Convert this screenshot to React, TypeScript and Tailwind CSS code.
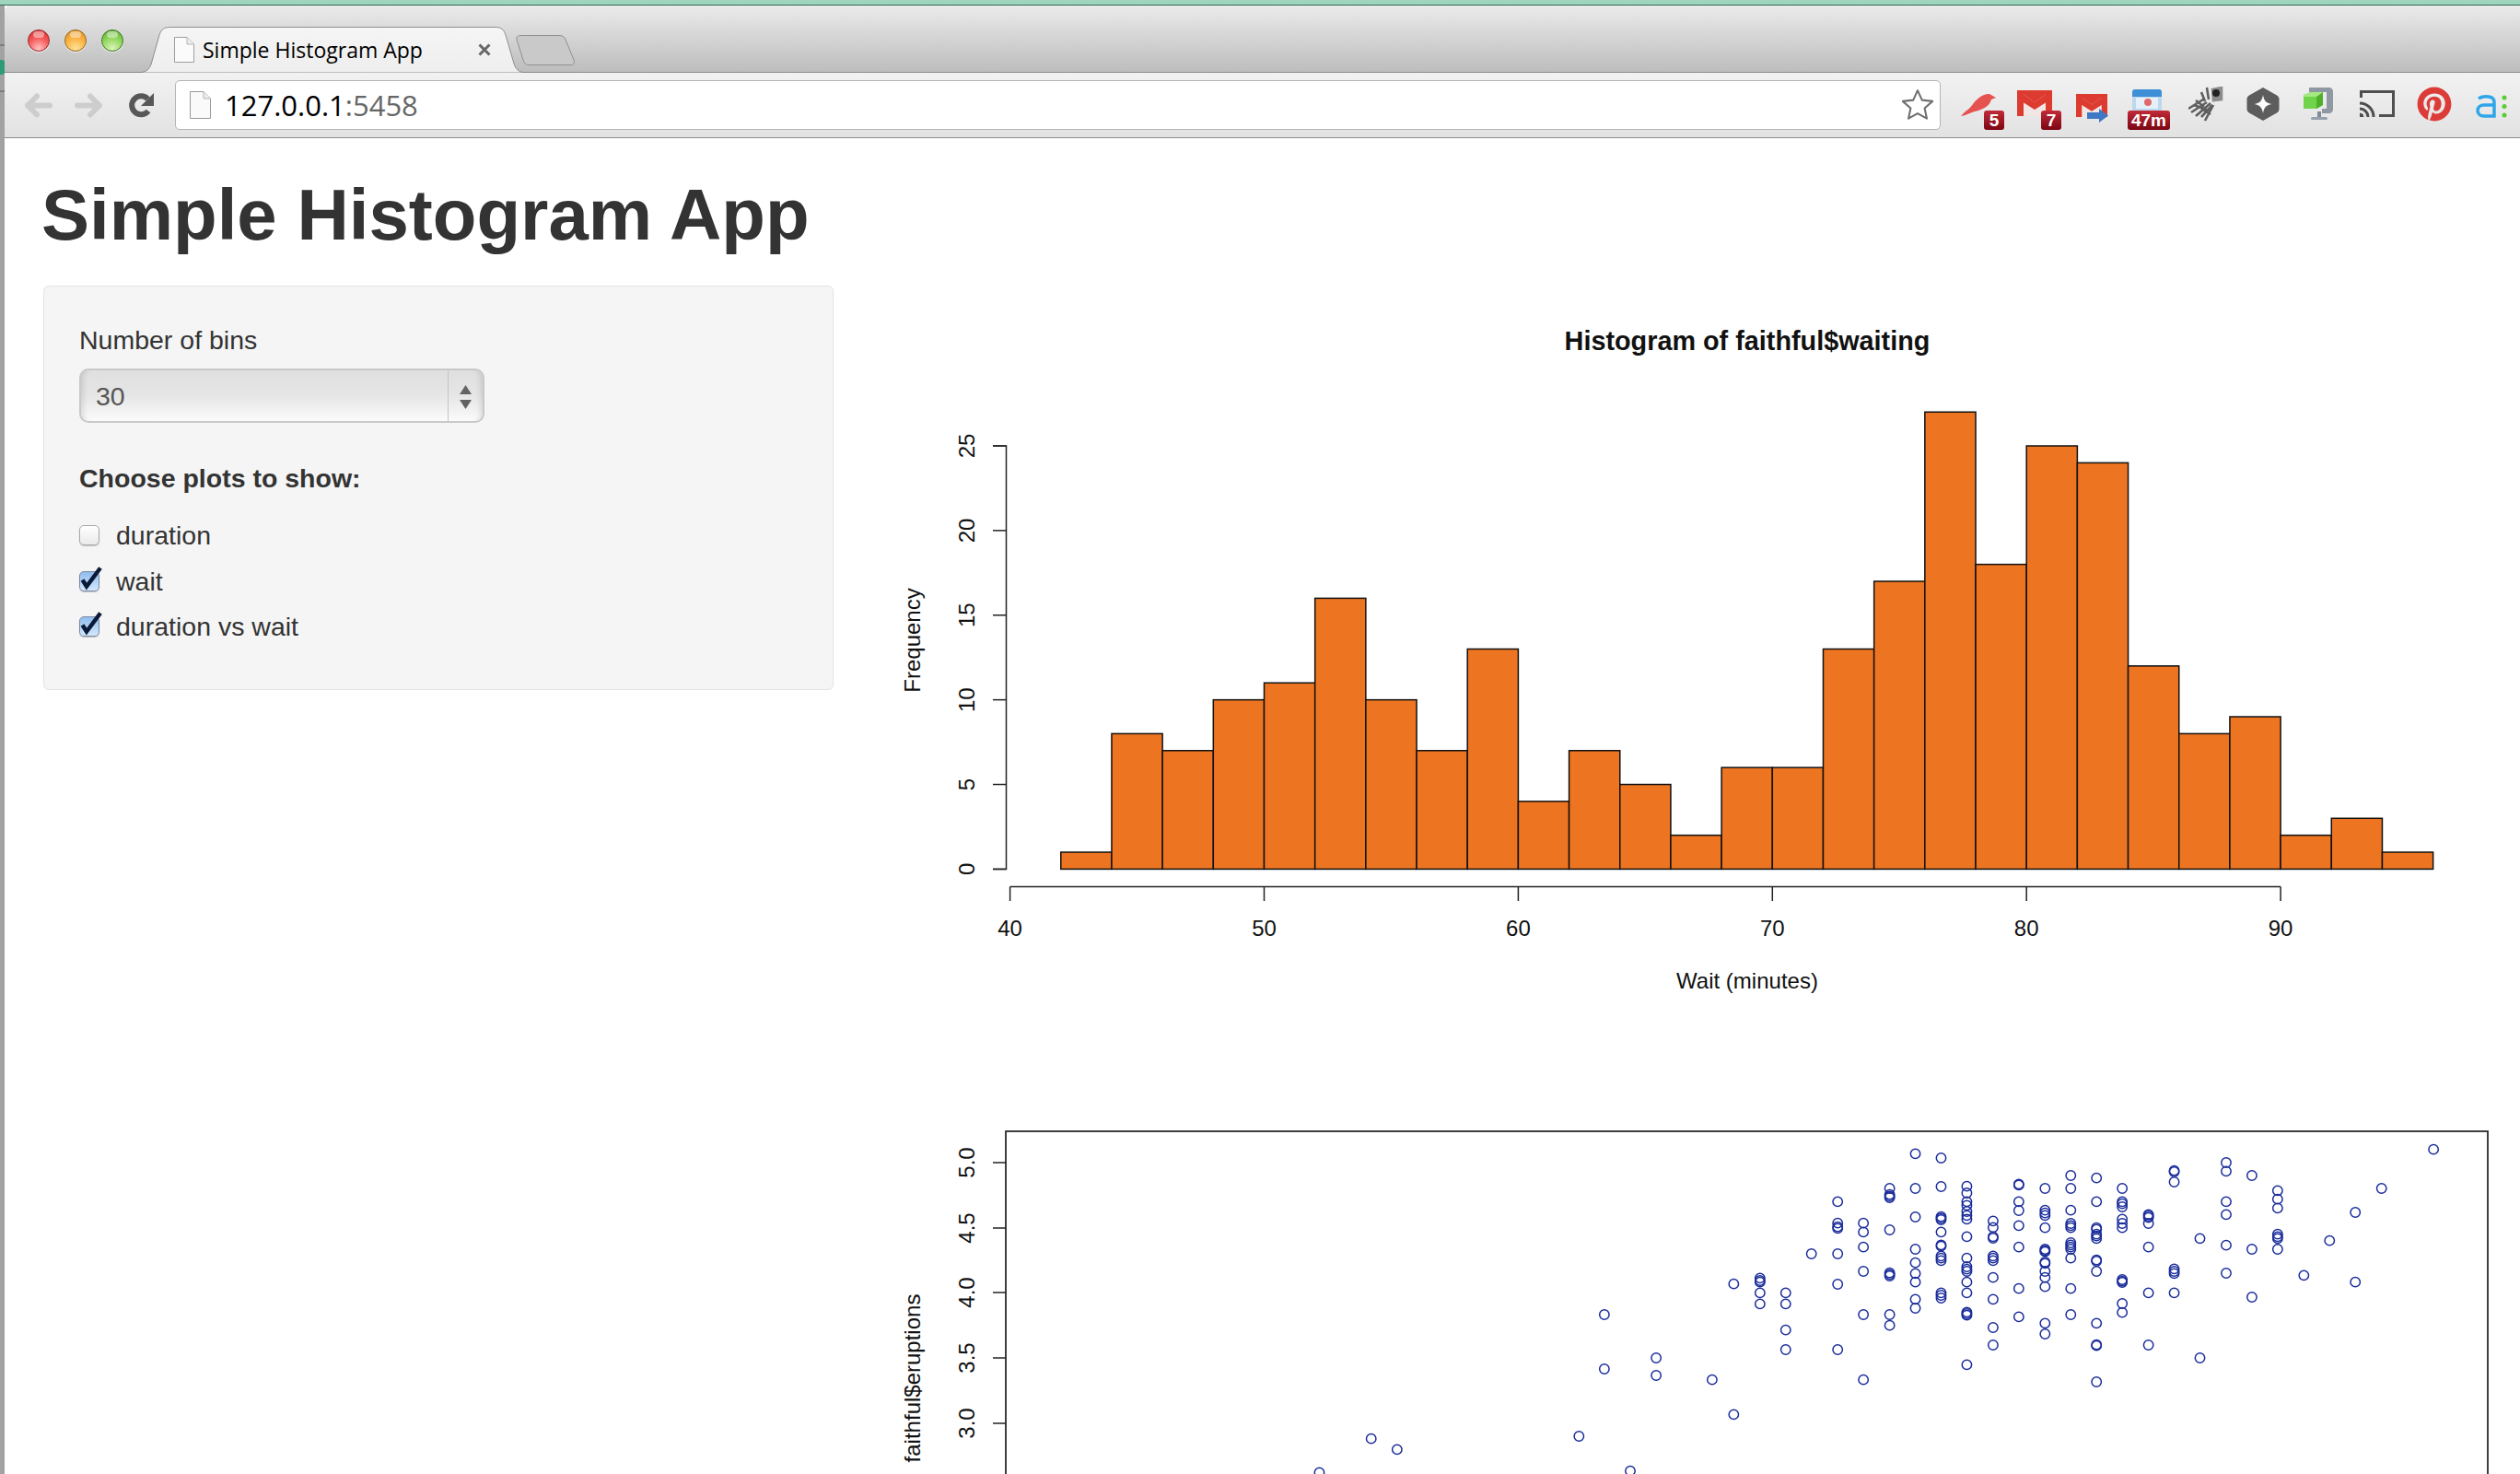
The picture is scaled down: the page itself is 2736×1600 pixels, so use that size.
import { FaPinterest } from "react-icons/fa";

const bars = [1, 8, 7, 10, 11, 16, 10, 7, 13, 4, 7, 5, 2, 6, 6, 13, 17, 27, 18, 25, 24, 12, 8, 9, 2, 3, 1];
const yPos = (v: number) => 943.4 - v * 18.376;
const xPos = (v: number) => 1096.6 + (v - 40) * 27.59;

const rightCols: [number, number[]][] = [
  [-2, [893]],
  [40, [581, 1006]],
  [91, [562, 570, 575, 610, 646]],
  [141, [610, 646, 731, 795]],
  [191, [483]],
  [242, [313, 383, 395, 400, 483, 582, 795]],
  [292, [383, 412, 461, 540, 681, 893]],
  [343, [270, 290, 295, 300, 405, 545, 550, 555, 681, 716]],
  [393, [157, 270, 363, 468, 512, 547, 575, 631, 660]],
  [443, [171, 264, 362, 367, 372, 412, 454, 458, 490, 497, 505, 610, 618, 627]],
  [493, [263, 285, 313, 325, 345, 358, 370, 427, 497, 525, 533, 540, 575, 610, 673, 678, 683, 844]],
  [544, [376, 397, 427, 432, 490, 497, 505, 560, 631, 723, 780]],
  [594, [256, 259, 313, 342, 391, 461, 596, 688]],
  [645, [270, 341, 350, 358, 398, 468, 472, 476, 510, 514, 540, 560, 590, 709, 744]],
  [695, [228, 270, 341, 384, 391, 398, 447, 454, 461, 468, 497, 596, 681]],
  [745, [236, 313, 398, 403, 419, 425, 433, 503, 507, 540, 709, 779, 782, 900]],
  [795, [270, 313, 320, 330, 370, 384, 398, 567, 572, 576, 645, 674]],
  [846, [355, 360, 365, 384, 461, 610, 780]],
  [896, [212, 216, 249, 532, 540, 547, 610]],
  [946, [433, 822]],
  [997, [186, 214, 313, 355, 455, 546]],
  [1047, [228, 468, 624]],
  [1097, [277, 305, 334, 419, 427, 433, 468]],
  [1148, [553]],
  [1198, [440]],
  [1248, [348, 575]],
  [1299, [270]],
  [1400, [143]],
];
const leftPts: [number, number][] = [
  [823, 1195], [921, 1085], [970, 1120], [1314, 1077], [1362, 681], [1362, 858], [1411, 1190], [1460, 822], [1460, 879],
];
const points: [number, number][] = [
  ...leftPts.map(([x, y]): [number, number] => [960 + x / 1.742, 1200 + y / 3]),
  ...rightCols.flatMap(([x, ys]) => ys.map((y): [number, number] => [1860 + x / 1.79, 1200 + y / 3])),
];

function Light({ grad, ring }: { grad: string; ring: string }) {
  return (
    <div className={`relative w-[24px] h-[24px] rounded-full border ${ring} ${grad} shadow-[0_1px_1px_rgba(255,255,255,0.7)]`}>
      <div className="absolute left-[5px] top-[1px] w-[12px] h-[7px] rounded-full bg-white/45" />
    </div>
  );
}

function Badge({ children, className }: { children: string; className: string }) {
  return (
    <div
      className={`absolute bottom-[1px] h-[21px] rounded-[3px] bg-linear-to-b from-[#c22a38] to-[#7c0512] text-white font-bold text-[19px] leading-[21px] text-center font-['Liberation_Sans',sans-serif] ${className}`}
    >
      {children}
    </div>
  );
}

function GmailGlyph({ w, h }: { w: number; h: number }) {
  return (
    <svg className="blur-[0.4px]" width={w} height={h} viewBox="0 0 38 28">
      <rect width="38" height="28" fill="#f1e6e3" />
      <path d="M6 3H32L19 13Z" fill="#f3c3bb" />
      <path d="M0 0H38V3H33L19 13L5 3H0Z" fill="#dd3a30" />
      <path d="M0 3H5L19 13L33 3H38V9L19 21L0 9Z" fill="#dd3a30" />
      <rect width="7" height="28" fill="#dd3a30" />
      <rect x="31" width="7" height="28" fill="#dd3a30" />
    </svg>
  );
}

function Checkbox({ checked }: { checked: boolean }) {
  return (
    <div
      className={`relative w-[22px] h-[22px] rounded-[5px] border shrink-0 shadow-[0_1px_1px_rgba(0,0,0,0.2)] ${
        checked
          ? "border-[#7c8aa4] bg-linear-to-b from-[#8fbdee] to-[#d3e8fc]"
          : "border-[#a8a8a8] bg-linear-to-b from-white to-[#eaeaea]"
      }`}
    >
      {checked && (
        <svg className="absolute left-[-1px] top-[-6px] overflow-visible" width="28" height="28" viewBox="0 0 28 28">
          <path d="M3.500 14.500L8 21.500L23 1.500" fill="none" stroke="#0b1a38" strokeWidth="4.500" />
        </svg>
      )}
    </div>
  );
}

function CheckRow({ checked, label }: { checked: boolean; label: string }) {
  return (
    <div className="flex items-center h-[40px] gap-[18px]">
      <Checkbox checked={checked} />
      <span>{label}</span>
    </div>
  );
}

export default function App() {
  return (
    <div className="w-[2736px] h-[1600px] overflow-hidden bg-white flex flex-col">
      <div className="h-[6px] shrink-0 bg-[#a0d5bd] border-b border-[#2f6b58]" />
      <div className="flex-1 flex min-h-0">
        <div className="relative w-[5px] shrink-0 bg-[#a2a2a2]">
          <div className="absolute left-0 top-[42px] w-full h-[2px] bg-[#7d7d7d]" />
          <div className="absolute left-0 top-[59px] w-[5px] h-[16px] rounded-r-[3px] bg-[#2f9a78]" />
          <div className="absolute left-0 top-[92px] w-full h-[2px] bg-[#7d7d7d]" />
        </div>
        <div className="flex-1 flex flex-col min-w-0">
          {/* tab strip */}
          <div className="relative h-[73px] shrink-0 flex items-start pl-[25px] rounded-tl-[6px] border-b border-[#8b8b8b] bg-linear-to-b from-[#ebebeb] to-[#bdbdbd]">
            <div className="flex gap-[16px] mt-[26px]">
              <Light ring="border-[#9c2a2a]" grad="bg-[radial-gradient(circle_at_50%_90%,#ffc4c4_0%,#f65d5d_50%,#e03a3a_80%,#b52828_100%)]" />
              <Light ring="border-[#96681a]" grad="bg-[radial-gradient(circle_at_50%_90%,#ffe39a_0%,#fbb445_50%,#ec9a2c_80%,#b57a1a_100%)]" />
              <Light ring="border-[#3f7a22]" grad="bg-[radial-gradient(circle_at_50%_90%,#dcf5bd_0%,#95d860_50%,#6cbb3e_80%,#4b8e28_100%)]" />
            </div>
            <div className="relative z-10 w-[415px] h-[50px] ml-[19px] mt-[23px] flex items-center pl-[36px] pr-[35px] text-black">
              <svg className="absolute inset-0" width="415" height="50" viewBox="0 0 415 50">
                <defs>
                  <linearGradient id="tabfill" x1="0" y1="0" x2="0" y2="1">
                    <stop offset="0" stopColor="#f5f5f5" />
                    <stop offset="1" stopColor="#eeeeee" />
                  </linearGradient>
                </defs>
                <path
                  d="M0 49.500C6 49 9 46 11 41L20 9C22 3 25 0.500 32 0.500H385C391 0.500 394 3 396 9L405 40C407 46 410 49 415 49.500"
                  fill="url(#tabfill)"
                  stroke="#8e8e8e"
                />
              </svg>
              <svg className="relative" width="22" height="28" viewBox="0 0 22 28">
                <path d="M0.500 0.500H14L21.500 8V27.500H0.500Z" fill="#fbfbfb" stroke="#9f9f9f" />
                <path d="M14 0.500V8H21.500" fill="#ededed" stroke="#b5b5b5" />
              </svg>
              <span className="relative ml-[9px] text-[23px] leading-[30px] font-['Open_Sans',sans-serif]">Simple Histogram App</span>
              <svg className="relative ml-auto" width="14" height="14" viewBox="0 0 14 14">
                <path d="M1.500 1.500L12.500 12.500M12.500 1.500L1.500 12.500" stroke="#666" strokeWidth="3" />
              </svg>
            </div>
            <svg className="mt-[32px] -ml-[8px]" width="65" height="33" viewBox="0 0 65 33">
              <path
                d="M1 5C0.500 2 2 0.500 6 0.500H47C51 0.500 53 2 54 5L63 27C64 31 63 32.500 59 32.500H15C11 32.500 9 31 8 27Z"
                fill="#c9c9c9"
                stroke="#8f8f8f"
              />
            </svg>
          </div>

          {/* toolbar */}
          <div className="h-[71px] shrink-0 flex items-center pl-[21px] border-b border-[#8b8b8b] bg-linear-to-b from-[#f2f2f2] to-[#e2e2e2]">
            <svg width="31" height="27" viewBox="0 0 31 27" fill="none" stroke="#cdcdcd" strokeWidth="6" strokeLinecap="round" strokeLinejoin="round">
              <path d="M28 13.500H4M14 3.500L4 13.500L14 23.500" />
            </svg>
            <svg className="ml-[24px]" width="31" height="27" viewBox="0 0 31 27" fill="none" stroke="#cdcdcd" strokeWidth="6" strokeLinecap="round" strokeLinejoin="round">
              <path d="M3 13.500H27M17 3.500L27 13.500L17 23.500" />
            </svg>
            <svg className="ml-[28px]" width="27" height="27" viewBox="0 0 27 27">
              <path d="M21 19.500A10 10 0 1 1 20.500 6.500" fill="none" stroke="#585858" strokeWidth="6" />
              <path d="M27 0V14H13Z" fill="#585858" />
            </svg>
            <div className="ml-[23px] w-[1917px] h-[54px] rounded-[5px] bg-white border border-[#b4b4b4] flex items-center pl-[15px] pr-[5px]">
              <svg width="23" height="30" viewBox="0 0 23 30">
                <path d="M0.500 0.500H15L22.500 8V29.500H0.500Z" fill="#fafafa" stroke="#9a9a9a" />
                <path d="M15 0.500V8H22.500" fill="#ececec" stroke="#b5b5b5" />
              </svg>
              <span className="ml-[15px] -mt-[1px] text-[31px] leading-[40px] font-['Open_Sans',sans-serif] text-black">
                127.0.0.1<span className="text-[#666]">:5458</span>
              </span>
              <svg className="ml-auto" width="38" height="38" viewBox="0 0 24 24" fill="#fff" stroke="#6f6f6f" strokeWidth="1.300" strokeLinejoin="round">
                <path d="M12 2l3 6.600 7.200.8-5.400 4.800 1.500 7.100L12 17.700l-6.300 3.600 1.500-7.100L1.800 9.400 9 8.600z" />
              </svg>
            </div>

            <div className="flex items-start h-[48px] mt-[8px]">
              <div className="relative ml-[22px] w-[47px] h-[48px]">
                <svg className="mt-[7px] blur-[0.5px]" width="38" height="25" viewBox="0 0 38 25">
                  <path d="M0 25C5 19 9 18 13 12C17 6 25 0 31 1L38 5L33 7C31 15 23 18 15 20C8 22 4 25 0 25Z" fill="#e5524f" />
                </svg>
                <Badge className="right-0 w-[22px]">5</Badge>
              </div>
              <div className="relative ml-[14px] w-[48px] h-[48px]">
                <div className="mt-[4px]"><GmailGlyph w={38} h={28} /></div>
                <Badge className="right-0 w-[22px]">7</Badge>
              </div>
              <div className="relative ml-[16px] w-[35px] h-[48px]">
                <div className="mt-[7px]"><GmailGlyph w={34} h={27} /></div>
                <svg className="absolute left-[12px] top-[24px]" width="23" height="15" viewBox="0 0 23 15">
                  <path d="M0 4H13V0L23 7.500L13 15V11H0Z" fill="#3f78c4" />
                </svg>
              </div>
              <div className="relative ml-[21px] w-[46px] h-[48px]">
                <svg className="mt-[3px] ml-[5px] blur-[0.4px]" width="32" height="24" viewBox="0 0 32 24">
                  <rect width="32" height="24" rx="3" fill="#bcd8ee" />
                  <path d="M0 8V3A3 3 0 0 1 3 0H29A3 3 0 0 1 32 3V8Z" fill="#3e8fd6" />
                  <rect x="4" y="9" width="24" height="12" fill="#e6f0f9" />
                  <circle cx="17" cy="14" r="4" fill="#e06a6a" />
                </svg>
                <Badge className="left-0 w-[46px]">47m</Badge>
              </div>
              <div className="relative ml-[20px] w-[39px] h-[48px]">
                <svg className="blur-[0.7px]" width="39" height="38" viewBox="0 0 39 38" fill="none" stroke="#5f5f5f" strokeWidth="2.600">
                  <path d="M0 24L16 14M3 28L20 17M8 32L24 18M14 33L26 20M18 37L27 20M14 6L18 16M20 1L22 14M8 15L17 22M14 24L24 30M6 20L22 26" />
                  <path d="M26 3L36 1V14L27 15Z" fill="#8c8c8c" stroke="#8c8c8c" />
                  <circle cx="30" cy="7" r="4" fill="#222" stroke="none" />
                </svg>
              </div>
              <div className="relative ml-[24px] w-[36px] h-[48px]">
                <svg width="36" height="38" viewBox="0 0 36 38">
                  <path d="M18 1L33 9.500C34.500 10.500 35.500 12 35.500 13.500V24.500C35.500 26 34.500 27.500 33 28.500L18 37L3 28.500C1.500 27.500 0.500 26 0.500 24.500V13.500C0.500 12 1.500 10.500 3 9.500Z" fill="#5d5d5d" />
                  <path d="M18 9C19 15 21 18 27.500 19C21 20 19 23 18 29C17 23 15 20 8.500 19C15 18 17 15 18 9Z" fill="#fff" />
                </svg>
              </div>
              <div className="relative ml-[26px] w-[32px] h-[48px]">
                <svg width="32" height="38" viewBox="0 0 32 38">
                  <path d="M6 1H28C30 1 32 3 32 5V25C32 27 30 29 28 29H20V24H25V6H6Z" fill="#8f98a3" />
                  <rect x="15" y="27" width="4" height="7" fill="#7f8a97" />
                  <rect x="8" y="33" width="18" height="3" rx="1.500" fill="#95a0ad" />
                  <path d="M0 9L8 6H21V20L14 24H0Z" fill="#70d44a" />
                  <path d="M14 11L21 6V20L14 24Z" fill="#4fae2c" />
                  <path d="M0 9L8 6H21L14 11H0Z" fill="#a5e884" />
                </svg>
              </div>
              <div className="relative ml-[29px] w-[38px] h-[48px]">
                <svg className="mt-[4px]" width="38" height="29" viewBox="0 0 38 29" fill="none" stroke="#4f4f4f">
                  <path d="M1.500 8V1.500H36.500V27.500H21" strokeWidth="3" />
                  <path d="M0 14A15 15 0 0 1 15 29M0 20A9 9 0 0 1 9 29" strokeWidth="3" />
                  <path d="M0 25A4 4 0 0 1 4 29H0Z" fill="#4f4f4f" strokeWidth="1" />
                </svg>
              </div>
              <div className="relative ml-[24px] w-[38px] h-[48px]">
                <FaPinterest className="text-[38px] text-[#dc3c38]" />
              </div>
              <div className="relative ml-[26px] w-[34px] h-[48px]">
                <svg className="mt-[9px]" width="34" height="25" viewBox="0 0 34 25" fill="none">
                  <path d="M3 4C6 2 10 1.500 14 2C18 2.500 20 5 20 8V23H9C5 23 2 21 2 17C2 13 5 11 9 11H20" stroke="#2ea6ea" strokeWidth="3.500" />
                  <circle cx="31" cy="3" r="2.500" fill="#57cc35" />
                  <circle cx="31" cy="12.500" r="2.500" fill="#57cc35" />
                  <circle cx="31" cy="22" r="2.500" fill="#57cc35" />
                </svg>
              </div>
            </div>
          </div>

          {/* page */}
          <div className="flex-1 flex min-h-0 bg-white font-['Liberation_Sans',sans-serif]">
            <div className="w-[955px] shrink-0 pl-[42px] pr-[55px] pt-[41px]">
              <h1 className="-ml-[2px] whitespace-nowrap text-[78px] leading-[84px] font-bold text-[#333]">Simple Histogram App</h1>
              <div className="mt-[35px] h-[439px] rounded-[6px] border border-[#e3e3e3] bg-[#f5f5f5] pl-[38px] pt-[38px] text-[28.500px] leading-[40px] text-[#333]">
                <div>Number of bins</div>
                <div className="relative mt-[11px] w-[440px] h-[59px] rounded-[10px] border-2 border-[#c9c9c9] bg-linear-to-b from-[#dfdfdf] via-[#e6e6e6] to-[#fbfbfb] shadow-[inset_8px_0_6px_-6px_rgba(0,0,0,0.12),inset_-8px_0_6px_-6px_rgba(0,0,0,0.12)] flex items-center pl-[16px] text-[#555]">
                  <span>30</span>
                  <div className="absolute right-[37px] top-0 bottom-0 w-px bg-[#c4c4c4]" />
                  <svg className="absolute right-[12px] top-[16px]" width="13" height="26" viewBox="0 0 13 26" fill="#636363">
                    <path d="M6.500 0L13 10H0Z" />
                    <path d="M0 16H13L6.500 26Z" />
                  </svg>
                </div>
                <div className="mt-[40px] font-bold">Choose plots to show:</div>
                <div className="mt-[22px] flex flex-col gap-[9.500px]">
                  <CheckRow checked={false} label="duration" />
                  <CheckRow checked label="wait" />
                  <CheckRow checked label="duration vs wait" />
                </div>
              </div>
            </div>

            <div className="flex-1 min-w-0 flex flex-col pt-[190px] font-['Liberation_Sans',sans-serif]">
              <svg className="shrink-0" width="1776" height="760" viewBox="960 340 1776 760" fontFamily="'Liberation Sans', sans-serif" fill="#111">
                <text x="1897" y="380" textAnchor="middle" fontWeight="700" fontSize="28.800">Histogram of faithful$waiting</text>
                <path d="M1078 484.000H1092.500V943.400H1078" fill="none" stroke="#222" strokeWidth="1.500" />
                {[0, 5, 10, 15, 20, 25].map((v) => (
                  <g key={v}>
                    <path d={`M1078 ${yPos(v)}H1092.500`} stroke="#222" strokeWidth="1.500" />
                    <text transform={`translate(1057.500 ${yPos(v)}) rotate(-90)`} textAnchor="middle" fontSize="24">{v}</text>
                  </g>
                ))}
                <text transform="translate(999 695) rotate(-90)" textAnchor="middle" fontSize="24">Frequency</text>
                {bars.map((b, i) => (
                  <rect
                    key={i}
                    x={xPos(42 + 2 * i)}
                    y={yPos(b)}
                    width={27.59 * 2}
                    height={b * 18.376}
                    fill="#ed7521"
                    stroke="#111"
                    strokeWidth="1.500"
                  />
                ))}
                <path d={`M${xPos(40)} 962.500H${xPos(90)}`} stroke="#222" strokeWidth="1.500" />
                {[40, 50, 60, 70, 80, 90].map((v) => (
                  <g key={v}>
                    <path d={`M${xPos(v)} 962.500V978`} stroke="#222" strokeWidth="1.500" />
                    <text x={xPos(v)} y="1016" textAnchor="middle" fontSize="24">{v}</text>
                  </g>
                ))}
                <text x="1897" y="1073" textAnchor="middle" fontSize="24">Wait (minutes)</text>
              </svg>
              <svg className="mt-[100px] shrink-0" width="1776" height="400" viewBox="960 1200 1776 400" fontFamily="'Liberation Sans', sans-serif" fill="#111">
                <rect x="1092" y="1228" width="1609" height="500" fill="none" stroke="#2a2a2a" strokeWidth="1.800" />
                {[
                  ["5.0", 1262],
                  ["4.5", 1333],
                  ["4.0", 1403],
                  ["3.5", 1474],
                  ["3.0", 1545],
                ].map(([l, y]) => (
                  <g key={l as string}>
                    <path d={`M1078 ${y}H1092`} stroke="#222" strokeWidth="1.500" />
                    <text transform={`translate(1057.500 ${y}) rotate(-90)`} textAnchor="middle" fontSize="24">{l}</text>
                  </g>
                ))}
                <text transform="translate(999 1496) rotate(-90)" textAnchor="middle" fontSize="24">faithful$eruptions</text>
                {points.map(([x, y], i) => (
                  <circle key={i} cx={x} cy={y} r="5.200" fill="none" stroke="#1b2d9b" strokeWidth="1.500" />
                ))}
              </svg>
            </div>
          </div>
        </div>
      </div>
    </div>
  );
}
